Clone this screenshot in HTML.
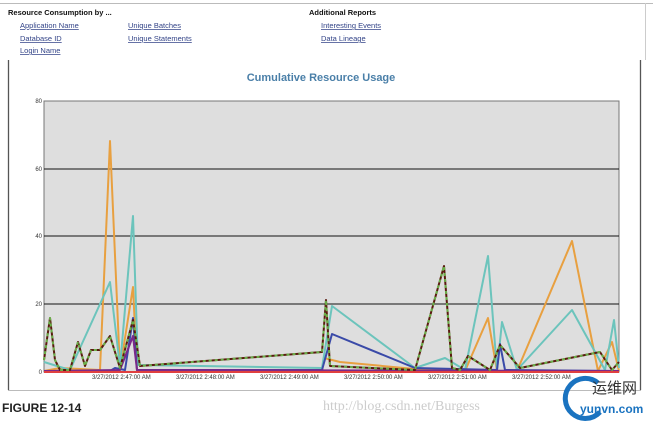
<!DOCTYPE html>
<html><head><meta charset="utf-8"><style>
html,body{margin:0;padding:0;background:#fff;width:653px;height:421px;overflow:hidden}
svg{display:block}
</style></head><body>
<svg width="653" height="421" xmlns="http://www.w3.org/2000/svg" font-family="Liberation Sans, sans-serif">
<rect width="653" height="421" fill="#fff"/>
<line x1="0" y1="3.5" x2="653" y2="3.5" stroke="#bbb"/>
<line x1="645.5" y1="3" x2="645.5" y2="60" stroke="#ccc"/>
<text x="8" y="15" font-size="7.5" font-weight="bold" fill="#111">Resource Consumption by ...</text>
<text x="309" y="15" font-size="7.5" font-weight="bold" fill="#111">Additional Reports</text>
<g font-size="7.5" fill="#334488" text-decoration="underline">
<text x="20" y="28">Application Name</text>
<text x="20" y="41">Database ID</text>
<text x="20" y="53">Login Name</text>
<text x="128" y="28">Unique Batches</text>
<text x="128" y="41">Unique Statements</text>
<text x="321" y="28">Interesting Events</text>
<text x="321" y="41">Data Lineage</text>
</g>
<line x1="8.5" y1="60" x2="8.5" y2="390" stroke="#555" stroke-width="1.3"/>
<line x1="640.5" y1="60" x2="640.5" y2="390" stroke="#555" stroke-width="1.3"/>
<line x1="8" y1="390.5" x2="641" y2="390.5" stroke="#bbb"/>
<text x="321" y="81" font-size="11" font-weight="bold" fill="#4a7fa8" text-anchor="middle">Cumulative Resource Usage</text>
<rect x="44" y="101" width="575" height="271" fill="#dedede" stroke="#777"/>
<g stroke="#111" stroke-width="1">
<line x1="44" y1="169" x2="619" y2="169"/><line x1="44" y1="236" x2="619" y2="236"/><line x1="44" y1="304" x2="619" y2="304"/>
</g>
<g font-size="6" fill="#333" text-anchor="end">
<text x="42" y="103">80</text><text x="42" y="171">60</text><text x="42" y="238">40</text><text x="42" y="306">20</text><text x="42" y="374">0</text>
</g>
<g fill="none" stroke-width="2" stroke-linejoin="round">
<polyline stroke="#e8a040" points="44,371 60,368 100,370 110,141 120,370 133,287 137,371 322,371 324,358 340,362 415,369 465,371 488,318 497,371 517,371 572,241 598,371 612,342 619,371"/>
<polyline stroke="#6cc4bc" points="44,362 70,370 110,282 120,367 133,216 138,365 322,368 332,306 415,368 445,358 465,370 488,256 497,370 502,322 517,370 572,310 605,370 614,320 619,368"/>
<polyline stroke="#3a4aa8" points="44,371 110,371 115,368 125,370 133,318 137,370 322,370 332,334 415,368 497,370 500,344 505,370 619,371"/>
<polyline stroke="#7a2a8a" points="44,371 120,370 133,336 137,370 619,371"/>
<polyline stroke="#5a1a10" points="44,360 50,318 55,360 60,370 70,370 78,342 85,366 91,350 100,350 110,336 120,368 133,320 140,366 322,352 326,300 330,366 415,370 444,266 452,368 460,370 468,356 490,370 500,345 520,368 600,352 612,370 619,362"/>
<polyline stroke="#6ab04a" stroke-dasharray="3,3" points="44,360 50,318 55,360 60,370 70,370 78,342 85,366 91,350 100,350 110,336 120,368 133,320 140,366 322,352 326,300 330,366 415,370 444,266 452,368 460,370 468,356 490,370 500,345 520,368 600,352 612,370 619,362"/>
<line stroke="#e04040" x1="44" y1="372" x2="619" y2="372"/>
</g>
<g font-size="6" fill="#333">
<text x="92" y="379">3/27/2012 2:47:00 AM</text>
<text x="176" y="379">3/27/2012 2:48:00 AM</text>
<text x="260" y="379">3/27/2012 2:49:00 AM</text>
<text x="344" y="379">3/27/2012 2:50:00 AM</text>
<text x="428" y="379">3/27/2012 2:51:00 AM</text>
<text x="512" y="379">3/27/2012 2:52:00 AM</text>
</g>
<text x="2" y="412" font-size="12" font-weight="bold" fill="#222">FIGURE 12-14</text>
<text x="323" y="410" font-size="14" font-family="Liberation Serif, serif" fill="#ccc">http://blog.csdn.net/Burgess</text>
<path d="M598 383 A20 20 0 1 0 600 412" fill="none" stroke="#1a73c0" stroke-width="5"/>
<text x="592" y="393" font-size="15" fill="#333" font-family="Liberation Sans, Noto Sans CJK SC, sans-serif">运维网</text>
<text x="580" y="413" font-size="12" font-weight="bold" fill="#1a73c0">yunvn.com</text>
</svg>
</body></html>
